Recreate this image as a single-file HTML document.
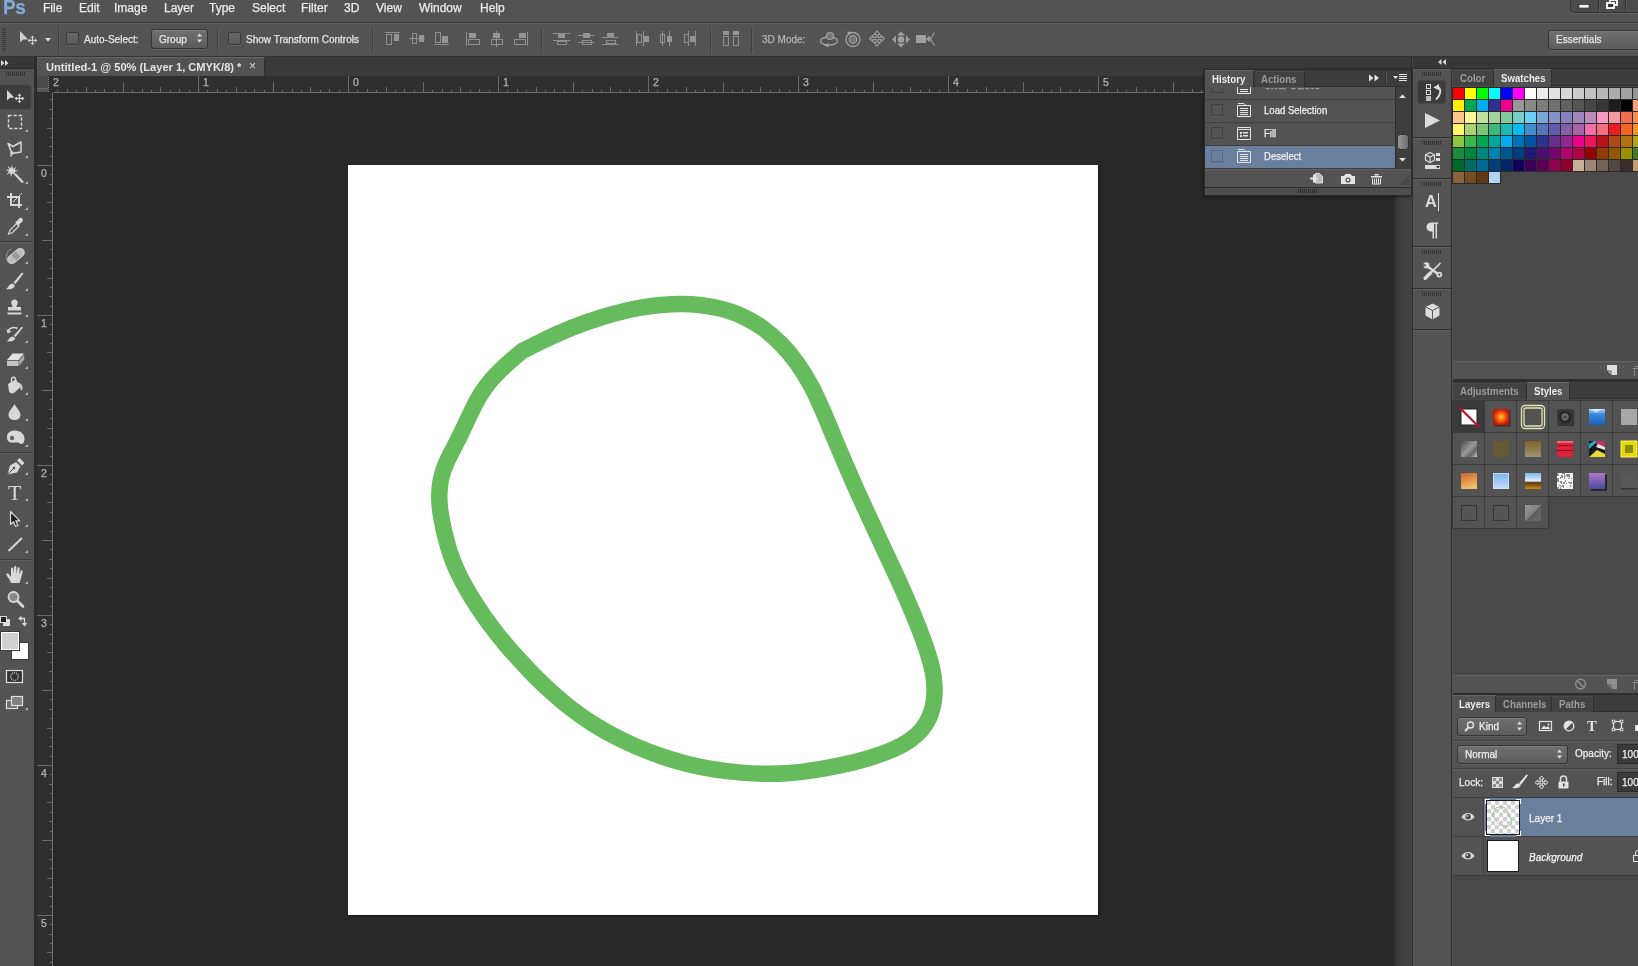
<!DOCTYPE html>
<html lang="en"><head><meta charset="utf-8"><title>Photoshop</title>
<style>
*{box-sizing:border-box;margin:0;padding:0}
html,body{width:1638px;height:966px;overflow:hidden;background:#535353}
body{font-family:"Liberation Sans",sans-serif;font-size:11px;color:#e6e6e6}
#app{position:relative;width:1638px;height:966px;overflow:hidden;background:#535353;will-change:transform}
.abs{position:absolute}
svg{position:absolute;overflow:visible}
.t{position:absolute;white-space:nowrap;line-height:1}
/* menu bar */
#menubar{position:absolute;left:0;top:0;width:1638px;height:23px;background:#535353;border-bottom:1px solid #383838}
#menubar .t{top:2px;font-size:12px;color:#eaeaea}
#optbar{position:absolute;left:0;top:23px;width:1638px;height:34px;background:#535353;border-top:1px solid #616161;border-bottom:1px solid #333}
.sep{position:absolute;top:4px;width:2px;height:25px;border-left:1px solid #3f3f3f;border-right:1px solid #5e5e5e}
.chk{position:absolute;width:13px;height:13px;border:1px solid #3a3a3a;border-radius:2px;background:linear-gradient(#686868,#5a5a5a);box-shadow:0 1px 0 #626262}
.dd{position:absolute;border:1px solid #353535;border-radius:3px;background:linear-gradient(#707070,#5c5c5c);box-shadow:inset 0 1px 0 #7e7e7e,0 1px 0 #606060}
.rl{font-size:10.5px;color:#b4b4b4}
.ui{font-size:10.5px;transform:scaleX(.91);transform-origin:0 0}
.tab{font-size:10.5px;font-weight:bold;color:#9c9c9c;transform:scaleX(.92);transform-origin:0 0}
.tab.on{color:#ececec}
.ui,#menubar .t,.rl{-webkit-text-stroke:.25px currentColor}

</style></head>
<body>
<div id="app">
<div id="menubar">
<span class="t" style="left:3px;top:-3px;font-size:20px;font-weight:bold;color:#82abd8;letter-spacing:-.5px;transform:scaleX(.95);transform-origin:0 0">Ps</span>
<span class="t" style="left:43px">File</span>
<span class="t" style="left:79px">Edit</span>
<span class="t" style="left:114px">Image</span>
<span class="t" style="left:164px">Layer</span>
<span class="t" style="left:209px">Type</span>
<span class="t" style="left:252px">Select</span>
<span class="t" style="left:301px">Filter</span>
<span class="t" style="left:344px">3D</span>
<span class="t" style="left:376px">View</span>
<span class="t" style="left:419px">Window</span>
<span class="t" style="left:480px">Help</span>
</div>
<div id="optbar">
<div class="sep" style="left:58px"></div>
<div class="chk" style="left:66px;top:8px"></div>
<span class="t ui" style="left:84px;top:10px;font-size:11px">Auto-Select:</span>
<div class="dd" style="left:151px;top:5px;width:57px;height:20px"></div>
<span class="t ui" style="left:159px;top:10px;font-size:11px">Group</span>
<div class="sep" style="left:217px"></div>
<div class="chk" style="left:228px;top:8px"></div>
<span class="t ui" style="left:246px;top:10px;font-size:11px">Show Transform Controls</span>
<div class="sep" style="left:372px"></div>
<div class="sep" style="left:541px"></div>
<div class="sep" style="left:710px"></div>
<div class="sep" style="left:751px"></div>
<span class="t ui" style="left:762px;top:10px;color:#b4b4b4;font-size:11px">3D Mode:</span>
<div class="dd" style="left:1548px;top:6px;width:110px;height:20px"></div>
<span class="t ui" style="left:1556px;top:10px;font-size:11px">Essentials</span>
</div>
<svg style="left:0;top:0" width="1638" height="57" shape-rendering="crispEdges"><rect x="2" y="28" width="4" height="1" fill="#3a3a3a"/><rect x="2" y="30" width="4" height="1" fill="#3a3a3a"/><rect x="2" y="32" width="4" height="1" fill="#3a3a3a"/><rect x="2" y="34" width="4" height="1" fill="#3a3a3a"/><rect x="2" y="36" width="4" height="1" fill="#3a3a3a"/><rect x="2" y="38" width="4" height="1" fill="#3a3a3a"/><rect x="2" y="40" width="4" height="1" fill="#3a3a3a"/><rect x="2" y="42" width="4" height="1" fill="#3a3a3a"/><rect x="2" y="44" width="4" height="1" fill="#3a3a3a"/><rect x="2" y="46" width="4" height="1" fill="#3a3a3a"/><rect x="2" y="48" width="4" height="1" fill="#3a3a3a"/><rect x="2" y="50" width="4" height="1" fill="#3a3a3a"/><g shape-rendering="auto"><path d="M20 31v11.500l3.200-3h5z" fill="#cfcfcf"/><path d="M32.500 35.500l-2 2.300h1.400v2h-2v-1.400l-2.300 2 2.300 2v-1.400h2v2h-1.400l2 2.300 2-2.300h-1.400v-2h2v1.400l2.300-2-2.300-2v1.400h-2v-2h1.400z" fill="#cfcfcf"/><path d="M45 38h6l-3 3.500z" fill="#e0e0e0"/></g><g shape-rendering="auto"><path d="M197 36.500l2.500-3 2.500 3zM197 39.500l2.500 3 2.500-3z" fill="#e4e4e4"/></g><rect x="385" y="32" width="15" height="1" fill="#909090"/><rect x="386.5" y="34.5" width="5" height="10" fill="none" stroke="#909090"/><rect x="394" y="34" width="5" height="7" fill="#949494"/><rect x="409" y="38" width="16" height="1" fill="#909090"/><rect x="412.5" y="33.5" width="4" height="10" fill="none" stroke="#909090"/><rect x="419" y="35" width="5" height="7" fill="#949494"/><rect x="434" y="44" width="15" height="1" fill="#909090"/><rect x="435.5" y="32.5" width="5" height="10" fill="none" stroke="#909090"/><rect x="442" y="36" width="6" height="7" fill="#949494"/><rect x="466" y="32" width="1" height="14" fill="#909090"/><rect x="469" y="33" width="7" height="5" fill="#949494"/><rect x="468.5" y="39.5" width="11" height="5" fill="none" stroke="#909090"/><rect x="496" y="31" width="1" height="16" fill="#909090"/><rect x="493" y="33" width="7" height="5" fill="#949494"/><rect x="491.5" y="39.5" width="11" height="5" fill="none" stroke="#909090"/><rect x="527" y="32" width="1" height="14" fill="#909090"/><rect x="519" y="33" width="7" height="5" fill="#949494"/><rect x="514.5" y="39.5" width="11" height="5" fill="none" stroke="#909090"/><rect x="553" y="33" width="17" height="1" fill="#909090"/><rect x="553" y="40" width="17" height="1" fill="#909090"/><rect x="558" y="34" width="7" height="4" fill="#949494"/><rect x="557.5" y="41.5" width="9" height="3" fill="none" stroke="#909090"/><rect x="578" y="35" width="16" height="1" fill="#909090"/><rect x="578" y="42" width="16" height="1" fill="#909090"/><rect x="583" y="33" width="7" height="5" fill="#949494"/><rect x="582.5" y="40.5" width="9" height="4" fill="none" stroke="#909090"/><rect x="602" y="37" width="16" height="1" fill="#909090"/><rect x="602" y="44" width="16" height="1" fill="#909090"/><rect x="607" y="33" width="7" height="4" fill="#949494"/><rect x="606.5" y="40.5" width="9" height="3" fill="none" stroke="#909090"/><rect x="636" y="31" width="1" height="15" fill="#909090"/><rect x="643" y="31" width="1" height="15" fill="#909090"/><rect x="637.5" y="34.5" width="4" height="8" fill="none" stroke="#909090"/><rect x="644" y="36" width="5" height="6" fill="#949494"/><rect x="662" y="31" width="1" height="15" fill="#909090"/><rect x="669" y="31" width="1" height="15" fill="#909090"/><rect x="660.5" y="34.5" width="4" height="8" fill="none" stroke="#909090"/><rect x="667" y="36" width="5" height="6" fill="#949494"/><rect x="688" y="31" width="1" height="15" fill="#909090"/><rect x="695" y="31" width="1" height="15" fill="#909090"/><rect x="684.5" y="34.5" width="4" height="8" fill="none" stroke="#909090"/><rect x="690" y="36" width="5" height="6" fill="#949494"/><rect x="723" y="31" width="6" height="4" fill="#949494"/><rect x="733" y="31" width="6" height="4" fill="#949494"/><rect x="723.5" y="36.5" width="5" height="9" fill="none" stroke="#909090"/><rect x="733.5" y="36.5" width="5" height="9" fill="none" stroke="#909090"/></svg>
<svg style="left:0;top:0" width="1638" height="57"><ellipse cx="829" cy="41" rx="8.500" ry="4" fill="none" stroke="#a0a0a0" stroke-width="1.300"/><circle cx="830" cy="36" r="3.500" fill="#777" stroke="#a0a0a0" stroke-width="1.200"/><path d="M824 45.500l4.500-2.500v4.500z" fill="#a0a0a0"/><circle cx="853" cy="39.500" r="7" fill="none" stroke="#a0a0a0" stroke-width="1.300"/><circle cx="853" cy="39.500" r="3.800" fill="#777" stroke="#a0a0a0" stroke-width="1.200"/><path d="M847 31.500l5 .5-3 3.500z" fill="#a0a0a0"/><path d="M877 31l3 3.500h-2v3h3v-2l3.500 3-3.500 3v-2h-3v3h2l-3 3.500-3-3.500h2v-3h-3v2l-3.500-3 3.500-3v2h3v-3h-2z" fill="none" stroke="#a0a0a0" stroke-width="1.100"/><path d="M901 31.5l4 4h-8zM901 47.5l4-4h-8zM892 39.5l4-4v8zM910 39.5l-4-4v8z" fill="#a0a0a0"/><circle cx="901" cy="39.5" r="3.300" fill="#a0a0a0"/><rect x="916" y="35" width="10" height="8" fill="#a0a0a0"/><path d="M926 39l4-3.500v7z" fill="#a0a0a0"/><path d="M934.500 32.500l-4 6.500 4 6.500" fill="none" stroke="#a0a0a0" stroke-width="1.100"/><path d="M1570.500 -1v10c0 2 1.500 3.500 3.500 3.500h70v-13.500z" fill="#4c4c4c" stroke="#333"/><path d="M1571 13.500h70" stroke="#626262" stroke-width="1"/><rect x="1598" y="0" width="1" height="12" fill="#353535"/><rect x="1599" y="0" width="1" height="12" fill="#5a5a5a"/><rect x="1625" y="0" width="1" height="12" fill="#353535"/><rect x="1626" y="0" width="1" height="12" fill="#5a5a5a"/><rect x="1579" y="4.500" width="10" height="3.500" fill="#f0f0f0" stroke="#2a2a2a" stroke-width=".6"/><rect x="1610" y="0" width="7" height="5" fill="none" stroke="#f0f0f0" stroke-width="2"/><rect x="1607" y="3" width="7" height="5" fill="#333" stroke="#f0f0f0" stroke-width="2"/></svg>
<div class="abs" style="left:0;top:57px;width:1638px;height:13px;background:#3a3a3a"></div>
<div class="abs" style="left:36px;top:57px;width:1376px;height:19px;background:#3a3a3a"></div>
<div class="abs" style="left:37px;top:57px;width:228px;height:19px;background:#535353;border-top:1px solid #676767;border-left:1px solid #5c5c5c;border-right:1px solid #2f2f2f"></div>
<span class="t" id="doctitle" style="left:46px;top:62px;font-size:11px;font-weight:bold;color:#e4e4e4;transform:scaleX(1.01);transform-origin:0 0">Untitled-1 @ 50% (Layer 1, CMYK/8) *</span>
<span class="t" style="left:249px;top:60px;font-size:12px;color:#d8d8d8">×</span>
<div class="abs" style="left:36px;top:76px;width:1360px;height:890px;background:#282828"></div>
<svg style="left:36px;top:76px" width="1360" height="890" shape-rendering="crispEdges"><rect x="1" y="0" width="1359" height="17" fill="#2f2f2f"/><rect x="1" y="17" width="16" height="873" fill="#2f2f2f"/><rect x="21" y="14" width="1" height="3" fill="#6a6a6a"/><rect x="31" y="13" width="1" height="4" fill="#6a6a6a"/><rect x="40" y="14" width="1" height="3" fill="#6a6a6a"/><rect x="50" y="11" width="1" height="6" fill="#6a6a6a"/><rect x="59" y="14" width="1" height="3" fill="#6a6a6a"/><rect x="68" y="13" width="1" height="4" fill="#6a6a6a"/><rect x="78" y="14" width="1" height="3" fill="#6a6a6a"/><rect x="87" y="6" width="1" height="11" fill="#6a6a6a"/><rect x="96" y="14" width="1" height="3" fill="#6a6a6a"/><rect x="106" y="13" width="1" height="4" fill="#6a6a6a"/><rect x="115" y="14" width="1" height="3" fill="#6a6a6a"/><rect x="124" y="11" width="1" height="6" fill="#6a6a6a"/><rect x="134" y="14" width="1" height="3" fill="#6a6a6a"/><rect x="143" y="13" width="1" height="4" fill="#6a6a6a"/><rect x="153" y="14" width="1" height="3" fill="#6a6a6a"/><rect x="162" y="0" width="1" height="17" fill="#6a6a6a"/><rect x="171" y="14" width="1" height="3" fill="#6a6a6a"/><rect x="181" y="13" width="1" height="4" fill="#6a6a6a"/><rect x="190" y="14" width="1" height="3" fill="#6a6a6a"/><rect x="200" y="11" width="1" height="6" fill="#6a6a6a"/><rect x="209" y="14" width="1" height="3" fill="#6a6a6a"/><rect x="218" y="13" width="1" height="4" fill="#6a6a6a"/><rect x="228" y="14" width="1" height="3" fill="#6a6a6a"/><rect x="237" y="6" width="1" height="11" fill="#6a6a6a"/><rect x="246" y="14" width="1" height="3" fill="#6a6a6a"/><rect x="256" y="13" width="1" height="4" fill="#6a6a6a"/><rect x="265" y="14" width="1" height="3" fill="#6a6a6a"/><rect x="274" y="11" width="1" height="6" fill="#6a6a6a"/><rect x="284" y="14" width="1" height="3" fill="#6a6a6a"/><rect x="293" y="13" width="1" height="4" fill="#6a6a6a"/><rect x="303" y="14" width="1" height="3" fill="#6a6a6a"/><rect x="312" y="0" width="1" height="17" fill="#6a6a6a"/><rect x="321" y="14" width="1" height="3" fill="#6a6a6a"/><rect x="331" y="13" width="1" height="4" fill="#6a6a6a"/><rect x="340" y="14" width="1" height="3" fill="#6a6a6a"/><rect x="350" y="11" width="1" height="6" fill="#6a6a6a"/><rect x="359" y="14" width="1" height="3" fill="#6a6a6a"/><rect x="368" y="13" width="1" height="4" fill="#6a6a6a"/><rect x="378" y="14" width="1" height="3" fill="#6a6a6a"/><rect x="387" y="6" width="1" height="11" fill="#6a6a6a"/><rect x="396" y="14" width="1" height="3" fill="#6a6a6a"/><rect x="406" y="13" width="1" height="4" fill="#6a6a6a"/><rect x="415" y="14" width="1" height="3" fill="#6a6a6a"/><rect x="424" y="11" width="1" height="6" fill="#6a6a6a"/><rect x="434" y="14" width="1" height="3" fill="#6a6a6a"/><rect x="443" y="13" width="1" height="4" fill="#6a6a6a"/><rect x="453" y="14" width="1" height="3" fill="#6a6a6a"/><rect x="462" y="0" width="1" height="17" fill="#6a6a6a"/><rect x="471" y="14" width="1" height="3" fill="#6a6a6a"/><rect x="481" y="13" width="1" height="4" fill="#6a6a6a"/><rect x="490" y="14" width="1" height="3" fill="#6a6a6a"/><rect x="500" y="11" width="1" height="6" fill="#6a6a6a"/><rect x="509" y="14" width="1" height="3" fill="#6a6a6a"/><rect x="518" y="13" width="1" height="4" fill="#6a6a6a"/><rect x="528" y="14" width="1" height="3" fill="#6a6a6a"/><rect x="537" y="6" width="1" height="11" fill="#6a6a6a"/><rect x="546" y="14" width="1" height="3" fill="#6a6a6a"/><rect x="556" y="13" width="1" height="4" fill="#6a6a6a"/><rect x="565" y="14" width="1" height="3" fill="#6a6a6a"/><rect x="574" y="11" width="1" height="6" fill="#6a6a6a"/><rect x="584" y="14" width="1" height="3" fill="#6a6a6a"/><rect x="593" y="13" width="1" height="4" fill="#6a6a6a"/><rect x="603" y="14" width="1" height="3" fill="#6a6a6a"/><rect x="612" y="0" width="1" height="17" fill="#6a6a6a"/><rect x="621" y="14" width="1" height="3" fill="#6a6a6a"/><rect x="631" y="13" width="1" height="4" fill="#6a6a6a"/><rect x="640" y="14" width="1" height="3" fill="#6a6a6a"/><rect x="650" y="11" width="1" height="6" fill="#6a6a6a"/><rect x="659" y="14" width="1" height="3" fill="#6a6a6a"/><rect x="668" y="13" width="1" height="4" fill="#6a6a6a"/><rect x="678" y="14" width="1" height="3" fill="#6a6a6a"/><rect x="687" y="6" width="1" height="11" fill="#6a6a6a"/><rect x="696" y="14" width="1" height="3" fill="#6a6a6a"/><rect x="706" y="13" width="1" height="4" fill="#6a6a6a"/><rect x="715" y="14" width="1" height="3" fill="#6a6a6a"/><rect x="724" y="11" width="1" height="6" fill="#6a6a6a"/><rect x="734" y="14" width="1" height="3" fill="#6a6a6a"/><rect x="743" y="13" width="1" height="4" fill="#6a6a6a"/><rect x="753" y="14" width="1" height="3" fill="#6a6a6a"/><rect x="762" y="0" width="1" height="17" fill="#6a6a6a"/><rect x="771" y="14" width="1" height="3" fill="#6a6a6a"/><rect x="781" y="13" width="1" height="4" fill="#6a6a6a"/><rect x="790" y="14" width="1" height="3" fill="#6a6a6a"/><rect x="800" y="11" width="1" height="6" fill="#6a6a6a"/><rect x="809" y="14" width="1" height="3" fill="#6a6a6a"/><rect x="818" y="13" width="1" height="4" fill="#6a6a6a"/><rect x="828" y="14" width="1" height="3" fill="#6a6a6a"/><rect x="837" y="6" width="1" height="11" fill="#6a6a6a"/><rect x="846" y="14" width="1" height="3" fill="#6a6a6a"/><rect x="856" y="13" width="1" height="4" fill="#6a6a6a"/><rect x="865" y="14" width="1" height="3" fill="#6a6a6a"/><rect x="874" y="11" width="1" height="6" fill="#6a6a6a"/><rect x="884" y="14" width="1" height="3" fill="#6a6a6a"/><rect x="893" y="13" width="1" height="4" fill="#6a6a6a"/><rect x="903" y="14" width="1" height="3" fill="#6a6a6a"/><rect x="912" y="0" width="1" height="17" fill="#6a6a6a"/><rect x="921" y="14" width="1" height="3" fill="#6a6a6a"/><rect x="931" y="13" width="1" height="4" fill="#6a6a6a"/><rect x="940" y="14" width="1" height="3" fill="#6a6a6a"/><rect x="950" y="11" width="1" height="6" fill="#6a6a6a"/><rect x="959" y="14" width="1" height="3" fill="#6a6a6a"/><rect x="968" y="13" width="1" height="4" fill="#6a6a6a"/><rect x="978" y="14" width="1" height="3" fill="#6a6a6a"/><rect x="987" y="6" width="1" height="11" fill="#6a6a6a"/><rect x="996" y="14" width="1" height="3" fill="#6a6a6a"/><rect x="1006" y="13" width="1" height="4" fill="#6a6a6a"/><rect x="1015" y="14" width="1" height="3" fill="#6a6a6a"/><rect x="1024" y="11" width="1" height="6" fill="#6a6a6a"/><rect x="1034" y="14" width="1" height="3" fill="#6a6a6a"/><rect x="1043" y="13" width="1" height="4" fill="#6a6a6a"/><rect x="1053" y="14" width="1" height="3" fill="#6a6a6a"/><rect x="1062" y="0" width="1" height="17" fill="#6a6a6a"/><rect x="1071" y="14" width="1" height="3" fill="#6a6a6a"/><rect x="1081" y="13" width="1" height="4" fill="#6a6a6a"/><rect x="1090" y="14" width="1" height="3" fill="#6a6a6a"/><rect x="1100" y="11" width="1" height="6" fill="#6a6a6a"/><rect x="1109" y="14" width="1" height="3" fill="#6a6a6a"/><rect x="1118" y="13" width="1" height="4" fill="#6a6a6a"/><rect x="1128" y="14" width="1" height="3" fill="#6a6a6a"/><rect x="1137" y="6" width="1" height="11" fill="#6a6a6a"/><rect x="1146" y="14" width="1" height="3" fill="#6a6a6a"/><rect x="1156" y="13" width="1" height="4" fill="#6a6a6a"/><rect x="1165" y="14" width="1" height="3" fill="#6a6a6a"/><rect x="1174" y="11" width="1" height="6" fill="#6a6a6a"/><rect x="1184" y="14" width="1" height="3" fill="#6a6a6a"/><rect x="1193" y="13" width="1" height="4" fill="#6a6a6a"/><rect x="1203" y="14" width="1" height="3" fill="#6a6a6a"/><rect x="1212" y="0" width="1" height="17" fill="#6a6a6a"/><rect x="1221" y="14" width="1" height="3" fill="#6a6a6a"/><rect x="1231" y="13" width="1" height="4" fill="#6a6a6a"/><rect x="1240" y="14" width="1" height="3" fill="#6a6a6a"/><rect x="1250" y="11" width="1" height="6" fill="#6a6a6a"/><rect x="1259" y="14" width="1" height="3" fill="#6a6a6a"/><rect x="1268" y="13" width="1" height="4" fill="#6a6a6a"/><rect x="1278" y="14" width="1" height="3" fill="#6a6a6a"/><rect x="1287" y="6" width="1" height="11" fill="#6a6a6a"/><rect x="1296" y="14" width="1" height="3" fill="#6a6a6a"/><rect x="1306" y="13" width="1" height="4" fill="#6a6a6a"/><rect x="1315" y="14" width="1" height="3" fill="#6a6a6a"/><rect x="1324" y="11" width="1" height="6" fill="#6a6a6a"/><rect x="1334" y="14" width="1" height="3" fill="#6a6a6a"/><rect x="1343" y="13" width="1" height="4" fill="#6a6a6a"/><rect x="1353" y="14" width="1" height="3" fill="#6a6a6a"/><rect x="14" y="23" width="3" height="1" fill="#6a6a6a"/><rect x="13" y="33" width="4" height="1" fill="#6a6a6a"/><rect x="14" y="42" width="3" height="1" fill="#6a6a6a"/><rect x="11" y="52" width="6" height="1" fill="#6a6a6a"/><rect x="14" y="61" width="3" height="1" fill="#6a6a6a"/><rect x="13" y="70" width="4" height="1" fill="#6a6a6a"/><rect x="14" y="80" width="3" height="1" fill="#6a6a6a"/><rect x="0" y="89" width="17" height="1" fill="#6a6a6a"/><rect x="14" y="98" width="3" height="1" fill="#6a6a6a"/><rect x="13" y="108" width="4" height="1" fill="#6a6a6a"/><rect x="14" y="117" width="3" height="1" fill="#6a6a6a"/><rect x="11" y="126" width="6" height="1" fill="#6a6a6a"/><rect x="14" y="136" width="3" height="1" fill="#6a6a6a"/><rect x="13" y="145" width="4" height="1" fill="#6a6a6a"/><rect x="14" y="155" width="3" height="1" fill="#6a6a6a"/><rect x="6" y="164" width="11" height="1" fill="#6a6a6a"/><rect x="14" y="173" width="3" height="1" fill="#6a6a6a"/><rect x="13" y="183" width="4" height="1" fill="#6a6a6a"/><rect x="14" y="192" width="3" height="1" fill="#6a6a6a"/><rect x="11" y="202" width="6" height="1" fill="#6a6a6a"/><rect x="14" y="211" width="3" height="1" fill="#6a6a6a"/><rect x="13" y="220" width="4" height="1" fill="#6a6a6a"/><rect x="14" y="230" width="3" height="1" fill="#6a6a6a"/><rect x="0" y="239" width="17" height="1" fill="#6a6a6a"/><rect x="14" y="248" width="3" height="1" fill="#6a6a6a"/><rect x="13" y="258" width="4" height="1" fill="#6a6a6a"/><rect x="14" y="267" width="3" height="1" fill="#6a6a6a"/><rect x="11" y="276" width="6" height="1" fill="#6a6a6a"/><rect x="14" y="286" width="3" height="1" fill="#6a6a6a"/><rect x="13" y="295" width="4" height="1" fill="#6a6a6a"/><rect x="14" y="305" width="3" height="1" fill="#6a6a6a"/><rect x="6" y="314" width="11" height="1" fill="#6a6a6a"/><rect x="14" y="323" width="3" height="1" fill="#6a6a6a"/><rect x="13" y="333" width="4" height="1" fill="#6a6a6a"/><rect x="14" y="342" width="3" height="1" fill="#6a6a6a"/><rect x="11" y="352" width="6" height="1" fill="#6a6a6a"/><rect x="14" y="361" width="3" height="1" fill="#6a6a6a"/><rect x="13" y="370" width="4" height="1" fill="#6a6a6a"/><rect x="14" y="380" width="3" height="1" fill="#6a6a6a"/><rect x="0" y="389" width="17" height="1" fill="#6a6a6a"/><rect x="14" y="398" width="3" height="1" fill="#6a6a6a"/><rect x="13" y="408" width="4" height="1" fill="#6a6a6a"/><rect x="14" y="417" width="3" height="1" fill="#6a6a6a"/><rect x="11" y="426" width="6" height="1" fill="#6a6a6a"/><rect x="14" y="436" width="3" height="1" fill="#6a6a6a"/><rect x="13" y="445" width="4" height="1" fill="#6a6a6a"/><rect x="14" y="455" width="3" height="1" fill="#6a6a6a"/><rect x="6" y="464" width="11" height="1" fill="#6a6a6a"/><rect x="14" y="473" width="3" height="1" fill="#6a6a6a"/><rect x="13" y="483" width="4" height="1" fill="#6a6a6a"/><rect x="14" y="492" width="3" height="1" fill="#6a6a6a"/><rect x="11" y="502" width="6" height="1" fill="#6a6a6a"/><rect x="14" y="511" width="3" height="1" fill="#6a6a6a"/><rect x="13" y="520" width="4" height="1" fill="#6a6a6a"/><rect x="14" y="530" width="3" height="1" fill="#6a6a6a"/><rect x="0" y="539" width="17" height="1" fill="#6a6a6a"/><rect x="14" y="548" width="3" height="1" fill="#6a6a6a"/><rect x="13" y="558" width="4" height="1" fill="#6a6a6a"/><rect x="14" y="567" width="3" height="1" fill="#6a6a6a"/><rect x="11" y="576" width="6" height="1" fill="#6a6a6a"/><rect x="14" y="586" width="3" height="1" fill="#6a6a6a"/><rect x="13" y="595" width="4" height="1" fill="#6a6a6a"/><rect x="14" y="605" width="3" height="1" fill="#6a6a6a"/><rect x="6" y="614" width="11" height="1" fill="#6a6a6a"/><rect x="14" y="623" width="3" height="1" fill="#6a6a6a"/><rect x="13" y="633" width="4" height="1" fill="#6a6a6a"/><rect x="14" y="642" width="3" height="1" fill="#6a6a6a"/><rect x="11" y="652" width="6" height="1" fill="#6a6a6a"/><rect x="14" y="661" width="3" height="1" fill="#6a6a6a"/><rect x="13" y="670" width="4" height="1" fill="#6a6a6a"/><rect x="14" y="680" width="3" height="1" fill="#6a6a6a"/><rect x="0" y="689" width="17" height="1" fill="#6a6a6a"/><rect x="14" y="698" width="3" height="1" fill="#6a6a6a"/><rect x="13" y="708" width="4" height="1" fill="#6a6a6a"/><rect x="14" y="717" width="3" height="1" fill="#6a6a6a"/><rect x="11" y="726" width="6" height="1" fill="#6a6a6a"/><rect x="14" y="736" width="3" height="1" fill="#6a6a6a"/><rect x="13" y="745" width="4" height="1" fill="#6a6a6a"/><rect x="14" y="755" width="3" height="1" fill="#6a6a6a"/><rect x="6" y="764" width="11" height="1" fill="#6a6a6a"/><rect x="14" y="773" width="3" height="1" fill="#6a6a6a"/><rect x="13" y="783" width="4" height="1" fill="#6a6a6a"/><rect x="14" y="792" width="3" height="1" fill="#6a6a6a"/><rect x="11" y="802" width="6" height="1" fill="#6a6a6a"/><rect x="14" y="811" width="3" height="1" fill="#6a6a6a"/><rect x="13" y="820" width="4" height="1" fill="#6a6a6a"/><rect x="14" y="830" width="3" height="1" fill="#6a6a6a"/><rect x="0" y="839" width="17" height="1" fill="#6a6a6a"/><rect x="14" y="848" width="3" height="1" fill="#6a6a6a"/><rect x="13" y="858" width="4" height="1" fill="#6a6a6a"/><rect x="14" y="867" width="3" height="1" fill="#6a6a6a"/><rect x="11" y="876" width="6" height="1" fill="#6a6a6a"/><rect x="14" y="886" width="3" height="1" fill="#6a6a6a"/><rect x="17" y="16" width="1343" height="1" fill="#707070"/><rect x="16" y="17" width="1" height="873" fill="#707070"/><rect x="1" y="0" width="16" height="17" fill="#2f2f2f"/><rect x="1" y="0" width="11" height="16" fill="#4a4a4a"/><rect x="1" y="12" width="11" height="4" fill="#565656"/><rect x="12" y="1" width="1" height="1" fill="#8a8a8a"/><rect x="12" y="3" width="1" height="1" fill="#8a8a8a"/><rect x="12" y="5" width="1" height="1" fill="#8a8a8a"/><rect x="12" y="7" width="1" height="1" fill="#8a8a8a"/><rect x="12" y="9" width="1" height="1" fill="#8a8a8a"/><rect x="12" y="11" width="1" height="1" fill="#8a8a8a"/><rect x="12" y="13" width="1" height="1" fill="#8a8a8a"/><rect x="12" y="15" width="1" height="1" fill="#8a8a8a"/><rect x="1" y="12" width="1" height="1" fill="#777"/><rect x="3" y="12" width="1" height="1" fill="#777"/><rect x="5" y="12" width="1" height="1" fill="#777"/><rect x="7" y="12" width="1" height="1" fill="#777"/><rect x="9" y="12" width="1" height="1" fill="#777"/><rect x="11" y="12" width="1" height="1" fill="#777"/></svg>
<span class="t rl" style="left:53px;top:77px">2</span>
<span class="t rl" style="left:203px;top:77px">1</span>
<span class="t rl" style="left:353px;top:77px">0</span>
<span class="t rl" style="left:503px;top:77px">1</span>
<span class="t rl" style="left:653px;top:77px">2</span>
<span class="t rl" style="left:803px;top:77px">3</span>
<span class="t rl" style="left:953px;top:77px">4</span>
<span class="t rl" style="left:1103px;top:77px">5</span>
<span class="t rl" style="left:41px;top:168px">0</span>
<span class="t rl" style="left:41px;top:318px">1</span>
<span class="t rl" style="left:41px;top:468px">2</span>
<span class="t rl" style="left:41px;top:618px">3</span>
<span class="t rl" style="left:41px;top:768px">4</span>
<span class="t rl" style="left:41px;top:918px">5</span>
<div class="abs" style="left:348px;top:165px;width:750px;height:750px;background:#fff;box-shadow:1px 1px 2px rgba(0,0,0,.55)"></div>
<svg style="left:0;top:0" width="1638" height="966"><path d="M522.5 350.8C525.6 349.3 534.8 344.6 541.1 341.6C547.4 338.6 553.9 335.5 560.4 332.7C566.9 329.9 573.7 327.1 580.4 324.6C587.1 322.1 593.9 319.7 600.6 317.6C607.3 315.5 614.1 313.5 620.8 311.9C627.5 310.2 634.3 308.8 641.0 307.7C647.7 306.6 654.5 305.6 661.2 305.0C667.9 304.4 674.6 304.1 681.3 304.1C688.0 304.1 694.8 304.4 701.5 305.2C708.2 306.0 714.9 307.1 721.6 308.9C728.3 310.7 735.0 312.8 741.7 315.9C748.4 319.0 755.2 322.7 761.8 327.4C768.3 332.1 775.0 337.8 781.0 343.9C787.0 350.0 792.6 356.9 797.6 363.8C802.6 370.8 806.9 378.0 811.0 385.6C815.1 393.2 818.6 401.2 822.4 409.6C826.1 418.0 829.7 427.1 833.5 436.1C837.3 445.1 841.2 454.5 845.2 463.8C849.2 473.1 853.3 482.5 857.5 491.8C861.7 501.1 866.0 510.4 870.3 519.7C874.6 529.0 879.0 538.4 883.3 547.7C887.6 557.0 892.1 566.3 896.3 575.6C900.5 584.9 904.8 594.3 908.6 603.3C912.5 612.3 916.2 621.4 919.4 629.5C922.5 637.6 925.3 645.3 927.5 652.1C929.7 658.9 931.3 664.8 932.5 670.5C933.7 676.2 934.3 681.4 934.5 686.6C934.7 691.9 934.5 697.0 933.7 702.0C932.9 707.0 931.6 712.0 929.6 716.6C927.6 721.2 925.1 725.6 921.8 729.5C918.5 733.4 914.7 736.9 909.9 740.2C905.1 743.5 899.6 746.6 892.9 749.5C886.2 752.4 878.2 755.2 869.8 757.8C861.3 760.4 851.4 762.9 842.2 764.9C833.0 766.9 823.4 768.7 814.7 770.0C806.0 771.3 798.1 772.3 790.0 772.9C781.9 773.5 774.3 773.8 766.1 773.7C757.9 773.7 749.5 773.3 740.9 772.6C732.3 771.9 723.2 770.9 714.3 769.4C705.4 767.9 696.4 766.1 687.5 763.9C678.6 761.7 669.5 759.0 661.0 756.1C652.5 753.2 644.1 749.9 636.2 746.5C628.3 743.1 620.9 739.6 613.7 735.8C606.5 732.0 599.7 728.1 592.8 723.7C585.9 719.3 578.9 714.4 572.1 709.2C565.3 704.0 558.3 698.0 551.9 692.3C545.5 686.6 539.1 680.4 533.5 674.8C527.9 669.2 522.9 663.7 518.2 658.6C513.6 653.5 509.5 648.9 505.6 644.3C501.7 639.6 498.1 635.2 494.6 630.7C491.1 626.2 487.8 621.8 484.6 617.3C481.4 612.8 478.5 608.3 475.6 603.8C472.7 599.3 470.0 594.9 467.4 590.4C464.8 585.9 462.4 581.4 460.1 576.9C457.8 572.4 455.7 567.9 453.8 563.1C451.9 558.3 450.2 553.2 448.6 548.2C447.1 543.2 445.7 537.9 444.5 533.0C443.3 528.1 442.4 523.5 441.6 519.1C440.8 514.7 440.2 510.8 439.8 506.7C439.4 502.6 439.2 498.8 439.3 494.8C439.4 490.8 439.7 486.9 440.3 482.9C440.9 478.9 441.9 475.0 443.2 471.0C444.5 467.0 446.3 463.0 448.1 459.0C449.9 455.0 452.2 451.1 454.2 447.1C456.2 443.1 458.2 439.2 460.2 435.2C462.1 431.2 464.0 427.3 465.9 423.3C467.8 419.3 469.6 415.4 471.5 411.4C473.4 407.4 475.3 403.5 477.6 399.5C479.9 395.5 482.3 391.6 485.2 387.6C488.1 383.6 491.3 379.6 495.1 375.6C498.9 371.6 503.2 367.5 507.8 363.4C512.4 359.3 520.0 352.9 522.5 350.8" fill="none" stroke="#66bb5c" stroke-width="16.5" stroke-linejoin="round" stroke-linecap="round"/></svg>
<div class="abs" style="left:1393px;top:76px;width:19px;height:890px;background:linear-gradient(90deg,#292929,#3d3d3d 28%,#424242 60%,#414141)"></div>
<div class="abs" style="left:0;top:57px;width:37px;height:909px;background:#535353;border-right:3px solid #2b2b2b"></div>
<div class="abs" style="left:0;top:57px;width:34px;height:12px;background:#383838;border-bottom:1px solid #2c2c2c"></div>
<svg style="left:0;top:0" width="36" height="966"><path d="M1 60l3.5 3-3.5 3zM5 60l3.5 3-3.5 3z" fill="#d8d8d8"/><rect x="6" y="72" width="1" height="4" fill="#333"/><rect x="8" y="72" width="1" height="4" fill="#333"/><rect x="10" y="72" width="1" height="4" fill="#333"/><rect x="12" y="72" width="1" height="4" fill="#333"/><rect x="14" y="72" width="1" height="4" fill="#333"/><rect x="16" y="72" width="1" height="4" fill="#333"/><rect x="18" y="72" width="1" height="4" fill="#333"/><rect x="20" y="72" width="1" height="4" fill="#333"/><rect x="22" y="72" width="1" height="4" fill="#333"/><rect x="24" y="72" width="1" height="4" fill="#333"/><rect x="-2" y="85" width="33" height="24" rx="2" fill="#3d3d3d" stroke="#474747"/><path d="M7 90v10.5l3-2.8h4.5z" fill="#d8d8d8"/><path d="M19.5 93.5l-2 2.3h1.4v2h-2v-1.4l-2.3 2 2.3 2v-1.4h2v2h-1.4l2 2.3 2-2.3h-1.4v-2h2v1.4l2.3-2-2.3-2v1.4h-2v-2h1.4z" fill="#d8d8d8"/><rect x="8.5" y="115.5" width="13" height="13" fill="none" stroke="#d8d8d8" stroke-width="1.4" stroke-dasharray="3.2 1.8"/><path d="M28 129v3h-3z" fill="#b8b8b8"/><path d="M8 143.5l5 3 3.5-2 4.5-2.5v10l-9 1.5zM12 153.5l-1.5 3" fill="none" stroke="#d8d8d8" stroke-width="1.5" stroke-linejoin="round"/><circle cx="12" cy="153" r="1.3" fill="none" stroke="#d8d8d8"/><path d="M28 155v3h-3z" fill="#b8b8b8"/><path d="M12 165l1 4 3.5-2.5-2 3.5 4 .8-4 1.2 1.5 3.5-3.5-2.3-1.5 3.8-.8-4-4 1.8 2.8-3.2-3.5-1.8 4-.3-2-3.8 3.3 2.5z" fill="#d8d8d8"/><path d="M15 174l8 8.5" stroke="#d8d8d8" stroke-width="2.2"/><path d="M28 181v3h-3z" fill="#b8b8b8"/><path d="M11 193v12h11M7 197h12v11" fill="none" stroke="#d8d8d8" stroke-width="2"/><path d="M22 193l-9 9" stroke="#d8d8d8" stroke-width="1"/><path d="M28 207v3h-3z" fill="#b8b8b8"/><path d="M8.5 234l1.5-4 6.5-6.5 2.5 2.5-6.5 6.5z" fill="none" stroke="#d8d8d8" stroke-width="1.2"/><path d="M15 222l2-1 2-2.5c1-1 2.5-1 3.3 0s.8 2.2 0 3.2l-2.5 2 -1 2z" fill="#d8d8d8"/><path d="M28 233v3h-3z" fill="#b8b8b8"/><rect x="0" y="241" width="32" height="1" fill="#3c3c3c"/><rect x="0" y="242" width="32" height="1" fill="#5e5e5e"/><g transform="rotate(-40 16 256)"><rect x="6.5" y="252" width="19" height="8" rx="4" fill="#bdbdbd" stroke="#d8d8d8" stroke-width="1"/><rect x="13" y="252.5" width="6" height="7" fill="#9a9a9a"/></g><path d="M8 262c-3-5-1.5-12 4-13" fill="none" stroke="#d8d8d8" stroke-dasharray="1 1.2"/><path d="M28 261v3h-3z" fill="#b8b8b8"/><path d="M23.5 273.500l-8 10.500 -2-1.500 8.500-10z" fill="#d8d8d8"/><path d="M12.500 283.500l2.500 2c-1 3-4 4.500-9 3.500 2.500-1 2.500-5 6.500-5.500z" fill="#d8d8d8"/><path d="M28 288v3h-3z" fill="#b8b8b8"/><path d="M14.500 299.500c2.200 0 3.300 1.500 3.300 3 0 1.800-1.300 2.500-1.300 4.500h4.500v3.500h-13v-3.500h4.500c0-2-1.300-2.700-1.300-4.500 0-1.500 1.100-3 3.300-3zM7.500 312.500h14v2h-14z" fill="#d8d8d8"/><path d="M28 314v3h-3z" fill="#b8b8b8"/><path d="M23 327.500l-7.500 9.500 -1.800-1.300 8-9z" fill="#d8d8d8"/><path d="M13 336.500l2.300 1.800c-1 2.500-4 4-8.800 3 2.500-.8 2.500-4.300 6.500-4.800z" fill="#d8d8d8"/><path d="M8 331c2-3.500 6-4.500 9.500-2.500" fill="none" stroke="#d8d8d8" stroke-width="1.600"/><path d="M6.500 329l1 4.500 4-1.800z" fill="#d8d8d8"/><path d="M28 340v3h-3z" fill="#b8b8b8"/><path d="M12.500 353.500h11.500l-5.500 6.500h-11.500z" fill="#e4e4e4"/><path d="M7 360.800h11.500v5.200h-11.500z" fill="#c4c4c4"/><path d="M19.200 360.500l5-6v5l-5 6.300z" fill="#a8a8a8"/><path d="M28 366v3h-3z" fill="#b8b8b8"/><path d="M8 384l8-4.500 4.500 7.500-6.500 6c-2 1-4 .5-5-1.500z" fill="#d8d8d8"/><path d="M11.500 383v-3.500c0-3 4-3 4 0v5" fill="none" stroke="#d8d8d8" stroke-width="1.400"/><path d="M18 382.500c3 .5 4.500 2.500 4.500 6.500 0 1.500-2 1.500-2 0 0-2.500-.8-4-2.500-5z" fill="#d8d8d8"/><path d="M28 392v3h-3z" fill="#b8b8b8"/><path d="M14.500 404c1.500 3.500 6 7 6 11 0 3-2.500 5-6 5s-6-2-6-5c0-4 4.500-7.500 6-11z" fill="#d8d8d8"/><path d="M28 418v3h-3z" fill="#b8b8b8"/><path d="M7 437c0-4 3-6.500 8-6.500 5.500 0 9.500 3.500 9.500 8.500 0 3-1.500 5-3 5-2 0-2-1.500-4-1.500h-6c-3 0-4.500-2.500-4.500-5.500z" fill="#d8d8d8"/><circle cx="12" cy="438" r="2.200" fill="#666"/><path d="M28 444v3h-3z" fill="#b8b8b8"/><rect x="0" y="452" width="32" height="1" fill="#3c3c3c"/><rect x="0" y="453" width="32" height="1" fill="#5e5e5e"/><path d="M7.500 474.500l2.500-9 6-3.500 4.500 4.500-3.500 6z" fill="#d8d8d8"/><path d="M8 474l6-6" stroke="#444" stroke-width="1"/><circle cx="14" cy="468" r="1.200" fill="#444"/><path d="M17 460.500l2.500-2.500 5 5-2.500 2.500z" fill="#d8d8d8"/><path d="M28 472v3h-3z" fill="#b8b8b8"/><path d="M28 498v3h-3z" fill="#b8b8b8"/><path d="M10.500 511.500v13l3-2.800 2 4.800 2.300-1-2-4.700h4z" fill="#1e1e1e" stroke="#d8d8d8" stroke-width="1.200" stroke-linejoin="round"/><path d="M28 524v3h-3z" fill="#b8b8b8"/><path d="M8.500 551l13.500-13" stroke="#d8d8d8" stroke-width="1.800"/><path d="M28 550v3h-3z" fill="#b8b8b8"/><rect x="0" y="559" width="32" height="1" fill="#3c3c3c"/><rect x="0" y="560" width="32" height="1" fill="#5e5e5e"/><path d="M11 583c-1-3-3-5.500-4.500-8-.8-1.500 1-2.500 2-1.300l2.500 3v-8c0-1.500 2-1.500 2.200 0l.5 5 .3-6.500c0-1.500 2.200-1.500 2.300 0l.2 6.500 1-5.500c.3-1.500 2.300-1.200 2.200.3l-.5 6 1.500-3.500c.6-1.300 2.300-.6 2 .8-.8 3.500-1.700 7-3.200 11.200z" fill="#d8d8d8"/><path d="M28 581v3h-3z" fill="#b8b8b8"/><circle cx="13.500" cy="597" r="5" fill="#888" stroke="#d8d8d8" stroke-width="1.800"/><path d="M17.500 601l5.500 5.500" stroke="#d8d8d8" stroke-width="2.600" stroke-linecap="round"/><rect x="3.500" y="619.500" width="6" height="6" fill="#ddd" stroke="#ddd"/><rect x="0.500" y="616.500" width="6" height="6" fill="#222" stroke="#ddd"/><path d="M21 618.500h3.500v5" fill="none" stroke="#d8d8d8" stroke-width="1.300"/><path d="M18 618.500l3.500-2.800v5.600zM24.500 626.500l-2.800-3.500h5.600z" fill="#d8d8d8"/><rect x="11.500" y="642.500" width="17" height="17" fill="#ffffff" stroke="#3a3a3a"/><rect x="1.500" y="632.500" width="17" height="17" fill="#d0d0d0" stroke="#ffffff" stroke-width="1"/><rect x="0.500" y="631.500" width="19" height="19" fill="none" stroke="#3a3a3a"/><rect x="6.500" y="670.500" width="16" height="12" fill="#333" stroke="#e0e0e0" stroke-width="1.200"/><circle cx="14.500" cy="676.500" r="3.800" fill="none" stroke="#e0e0e0" stroke-width="1.200" stroke-dasharray="1 1.100"/><rect x="6.500" y="700.500" width="11" height="8" fill="#6a6a6a" stroke="#e0e0e0" stroke-width="1.200"/><rect x="11.500" y="696.500" width="11" height="9" fill="#808080" stroke="#e0e0e0" stroke-width="1.200"/><path d="M28 707v3h-3z" fill="#b8b8b8"/></svg>
<span class="t" style="left:8px;top:482px;font-family:'Liberation Serif',serif;font-size:22px;color:#d8d8d8">T</span>
<div class="abs" style="left:1204px;top:69px;width:208px;height:127px;background:#535353;border:1px solid #2a2a2a;box-shadow:0 1px 3px rgba(0,0,0,.5)"></div>
<div class="abs" style="left:1205px;top:70px;width:206px;height:17px;background:#3c3c3c;border-bottom:1px solid #2e2e2e"></div>
<div class="abs" style="left:1205px;top:70px;width:49px;height:17px;background:#535353;border-top:1px solid #666;border-right:1px solid #2e2e2e"></div>
<div class="abs" style="left:1255px;top:71px;width:50px;height:16px;background:#424242;border-right:1px solid #2e2e2e;border-top:1px solid #4c4c4c"></div>
<span class="t tab on" style="left:1212px;top:74px">History</span>
<span class="t tab" style="left:1261px;top:74px">Actions</span>
<div class="abs" style="left:1205px;top:87px;width:190px;height:13px;background:#535353;border-bottom:1px solid #3e3e3e;overflow:hidden"></div>
<div class="abs" style="left:1205px;top:100px;width:190px;height:23px;background:#535353;border-bottom:1px solid #3e3e3e;overflow:hidden"></div>
<span class="t ui" style="left:1264px;top:105px;color:#f0f0f0">Load Selection</span>
<div class="abs" style="left:1205px;top:123px;width:190px;height:23px;background:#535353;border-bottom:1px solid #3e3e3e;overflow:hidden"></div>
<span class="t ui" style="left:1264px;top:128px;color:#f0f0f0">Fill</span>
<div class="abs" style="left:1205px;top:146px;width:190px;height:23px;background:#6a7f9c;border-bottom:1px solid #3e3e3e;overflow:hidden"></div>
<span class="t ui" style="left:1264px;top:151px;color:#f0f0f0">Deselect</span>
<span class="t ui" style="left:1264px;top:80px;color:#f0f0f0;clip-path:inset(8.5px 0 0 0)">Clear Guides</span>
<svg style="left:0;top:0" width="1638" height="200"><rect x="1211.5" y="104.5" width="11" height="11" fill="none" stroke="#3f3f3f"/><path d="M1211.5 116.5h12" stroke="#666" stroke-opacity=".5"/><rect x="1211.5" y="127.5" width="11" height="11" fill="none" stroke="#3f3f3f"/><path d="M1211.5 139.5h12" stroke="#666" stroke-opacity=".5"/><rect x="1211.5" y="150.5" width="11" height="11" fill="none" stroke="#55688a"/><path d="M1211.5 162.5h12" stroke="#666" stroke-opacity=".5"/><rect x="1211.500" y="81.500" width="11" height="11" fill="none" stroke="#3f3f3f" clip-path="inset(7 0 0 0)"/><path d="M1237.500 105.5h13v11h-13z" fill="none" stroke="#e4e4e4"/><path d="M1238 103.5h6l2 2" fill="none" stroke="#e4e4e4"/><rect x="1240" y="108" width="8" height="1" fill="#e4e4e4"/><rect x="1240" y="110" width="8" height="1" fill="#e4e4e4"/><rect x="1240" y="112" width="8" height="1" fill="#e4e4e4"/><rect x="1240" y="114" width="8" height="1" fill="#e4e4e4"/><path d="M1237.500 127.5h13v12h-13z" fill="none" stroke="#e4e4e4"/><rect x="1238" y="129" width="12" height="1" fill="#e4e4e4"/><rect x="1240" y="132" width="2" height="2" fill="#e4e4e4"/><rect x="1243" y="132" width="5" height="1.5" fill="#e4e4e4"/><rect x="1240" y="135" width="2" height="2" fill="#e4e4e4"/><rect x="1243" y="135" width="5" height="1.5" fill="#e4e4e4"/><path d="M1237.500 151.5h13v11h-13z" fill="none" stroke="#e4e4e4"/><path d="M1238 149.5h6l2 2" fill="none" stroke="#e4e4e4"/><rect x="1240" y="154" width="8" height="1" fill="#e4e4e4"/><rect x="1240" y="156" width="8" height="1" fill="#e4e4e4"/><rect x="1240" y="158" width="8" height="1" fill="#e4e4e4"/><rect x="1240" y="160" width="8" height="1" fill="#e4e4e4"/><path d="M1237.500 87v6.500h13v-6.500" fill="none" stroke="#e4e4e4"/><rect x="1240" y="89" width="8" height="1" fill="#e4e4e4"/><rect x="1240" y="91" width="8" height="1" fill="#e4e4e4"/><rect x="1395" y="87" width="16" height="82" fill="#3e3e3e"/><rect x="1395" y="87" width="1" height="82" fill="#2e2e2e"/><path d="M1399 98l3.500-3.500 3.500 3.500z" fill="#e0e0e0"/><path d="M1399 158l3.500 3.500 3.500-3.500z" fill="#e0e0e0"/><defs><linearGradient id="thg" x1="0" x2="1"><stop offset="0" stop-color="#9a9a9a"/><stop offset="1" stop-color="#6c6c6c"/></linearGradient></defs><rect x="1397.500" y="134.500" width="11" height="15" rx="3" fill="url(#thg)" stroke="#2f2f2f"/><path d="M1369 74.500l4.500 3.500-4.500 3.500zM1374.500 74.500l4.500 3.500-4.500 3.500z" fill="#e4e4e4"/><rect x="1385" y="73" width="1" height="11" fill="#2e2e2e"/><rect x="1386" y="73" width="1" height="11" fill="#5a5a5a"/><path d="M1393 76h5l-2.500 3z" fill="#e4e4e4"/><rect x="1399" y="74" width="8" height="1" fill="#e4e4e4"/><rect x="1399" y="76" width="8" height="1" fill="#e4e4e4"/><rect x="1399" y="78" width="8" height="1" fill="#e4e4e4"/><rect x="1399" y="80" width="8" height="1" fill="#e4e4e4"/><rect x="1205" y="169" width="206" height="18" fill="#535353"/><rect x="1205" y="169" width="206" height="1" fill="#5e5e5e"/><path d="M1315.500 173.500h4l3 3v6.500h-7z" fill="#bbb" stroke="#e4e4e4"/><path d="M1310 178.500h8M1314 174.500v8" stroke="#e4e4e4" stroke-width="2"/><path d="M1341 176h3l1.500-2h5l1.500 2h3v8h-14z" fill="#e4e4e4"/><circle cx="1348" cy="180" r="2.600" fill="#535353"/><circle cx="1348" cy="180" r="1.300" fill="#e4e4e4"/><path d="M1371 176h11v1.500h-11zM1374.500 174h4v1.500h-4z" fill="#e4e4e4"/><path d="M1372.500 178.500v5.500h8v-5.500" fill="none" stroke="#e4e4e4"/><path d="M1374.500 178.500v5M1376.500 178.500v5M1378.500 178.500v5" stroke="#e4e4e4"/><rect x="1400.0" y="183.5" width="1.200" height="1.200" fill="#2e2e2e"/><rect x="1402.5" y="181.0" width="1.200" height="1.200" fill="#2e2e2e"/><rect x="1402.5" y="183.5" width="1.200" height="1.200" fill="#2e2e2e"/><rect x="1405.0" y="178.5" width="1.200" height="1.200" fill="#2e2e2e"/><rect x="1405.0" y="181.0" width="1.200" height="1.200" fill="#2e2e2e"/><rect x="1405.0" y="183.5" width="1.200" height="1.200" fill="#2e2e2e"/><rect x="1407.5" y="176.0" width="1.200" height="1.200" fill="#2e2e2e"/><rect x="1407.5" y="178.5" width="1.200" height="1.200" fill="#2e2e2e"/><rect x="1407.5" y="181.0" width="1.200" height="1.200" fill="#2e2e2e"/><rect x="1407.5" y="183.5" width="1.200" height="1.200" fill="#2e2e2e"/><rect x="1205" y="187" width="206" height="1" fill="#2e2e2e"/><rect x="1205" y="188" width="206" height="7" fill="#4d4d4d"/><rect x="1298" y="189" width="1" height="4" fill="#2e2e2e"/><rect x="1300" y="189" width="1" height="4" fill="#2e2e2e"/><rect x="1302" y="189" width="1" height="4" fill="#2e2e2e"/><rect x="1304" y="189" width="1" height="4" fill="#2e2e2e"/><rect x="1306" y="189" width="1" height="4" fill="#2e2e2e"/><rect x="1308" y="189" width="1" height="4" fill="#2e2e2e"/><rect x="1310" y="189" width="1" height="4" fill="#2e2e2e"/><rect x="1312" y="189" width="1" height="4" fill="#2e2e2e"/><rect x="1314" y="189" width="1" height="4" fill="#2e2e2e"/><rect x="1316" y="189" width="1" height="4" fill="#2e2e2e"/></svg>
<div class="abs" style="left:1412px;top:57px;width:226px;height:12px;background:#383838;border-bottom:1px solid #2c2c2c"></div>
<div class="abs" style="left:1412px;top:69px;width:40px;height:897px;background:#535353;border-left:1px solid #2e2e2e;border-right:1px solid #2e2e2e"></div>
<svg style="left:0;top:0" width="1638" height="400"><path d="M1441.500 59v6l-3.500-3zM1446 59v6l-3.500-3z" fill="#dcdcdc"/><rect x="1413" y="69" width="38" height="1" fill="#5f5f5f"/><rect x="1411" y="57" width="1" height="12" fill="#2a2a2a"/><rect x="1412" y="57" width="1" height="12" fill="#484848"/><rect x="1422" y="72" width="1" height="4" fill="#333"/><rect x="1424" y="72" width="1" height="4" fill="#333"/><rect x="1426" y="72" width="1" height="4" fill="#333"/><rect x="1428" y="72" width="1" height="4" fill="#333"/><rect x="1430" y="72" width="1" height="4" fill="#333"/><rect x="1432" y="72" width="1" height="4" fill="#333"/><rect x="1434" y="72" width="1" height="4" fill="#333"/><rect x="1436" y="72" width="1" height="4" fill="#333"/><rect x="1438" y="72" width="1" height="4" fill="#333"/><rect x="1440" y="72" width="1" height="4" fill="#333"/><rect x="1417.500" y="80.500" width="28" height="23" rx="3" fill="#3b3b3b" stroke="#474747"/><rect x="1426.500" y="84.500" width="4" height="4" fill="none" stroke="#dcdcdc"/><rect x="1426.500" y="90.500" width="4" height="4" fill="none" stroke="#dcdcdc"/><rect x="1426" y="96" width="5" height="5" fill="#bdbdbd"/><path d="M1436 99.500c3.500-3 6.500-9.500 2-12.800" fill="none" stroke="#dcdcdc" stroke-width="1.900"/><path d="M1433.300 87.500l5.700-3.500v6.200z" fill="#dcdcdc"/><path d="M1425 113l15 7.500-15 7.500z" fill="#dcdcdc"/><rect x="1413" y="137" width="38" height="1" fill="#2e2e2e"/><rect x="1413" y="138" width="38" height="1" fill="#5f5f5f"/><rect x="1422" y="141" width="1" height="4" fill="#333"/><rect x="1424" y="141" width="1" height="4" fill="#333"/><rect x="1426" y="141" width="1" height="4" fill="#333"/><rect x="1428" y="141" width="1" height="4" fill="#333"/><rect x="1430" y="141" width="1" height="4" fill="#333"/><rect x="1432" y="141" width="1" height="4" fill="#333"/><rect x="1434" y="141" width="1" height="4" fill="#333"/><rect x="1436" y="141" width="1" height="4" fill="#333"/><rect x="1438" y="141" width="1" height="4" fill="#333"/><rect x="1440" y="141" width="1" height="4" fill="#333"/><path d="M1430 152.500l4.500 2.300v5.400l-4.500 2.300-4.500-2.300v-5.400z" fill="none" stroke="#dcdcdc" stroke-width="1.200"/><path d="M1425.500 154.800l4.500 2.300 4.500-2.300M1430 157v5.500" fill="none" stroke="#dcdcdc" stroke-width="1.200"/><rect x="1436" y="153" width="4" height="3" fill="#dcdcdc"/><rect x="1436" y="158" width="4" height="3" fill="#dcdcdc"/><rect x="1425" y="165" width="15" height="4" fill="#dcdcdc"/><path d="M1436 166h4l-2 2.500z" fill="#222"/><rect x="1413" y="178" width="38" height="1" fill="#2e2e2e"/><rect x="1413" y="179" width="38" height="1" fill="#5f5f5f"/><rect x="1422" y="182" width="1" height="4" fill="#333"/><rect x="1424" y="182" width="1" height="4" fill="#333"/><rect x="1426" y="182" width="1" height="4" fill="#333"/><rect x="1428" y="182" width="1" height="4" fill="#333"/><rect x="1430" y="182" width="1" height="4" fill="#333"/><rect x="1432" y="182" width="1" height="4" fill="#333"/><rect x="1434" y="182" width="1" height="4" fill="#333"/><rect x="1436" y="182" width="1" height="4" fill="#333"/><rect x="1438" y="182" width="1" height="4" fill="#333"/><rect x="1440" y="182" width="1" height="4" fill="#333"/><rect x="1413" y="246" width="38" height="1" fill="#2e2e2e"/><rect x="1413" y="247" width="38" height="1" fill="#5f5f5f"/><rect x="1422" y="250" width="1" height="4" fill="#333"/><rect x="1424" y="250" width="1" height="4" fill="#333"/><rect x="1426" y="250" width="1" height="4" fill="#333"/><rect x="1428" y="250" width="1" height="4" fill="#333"/><rect x="1430" y="250" width="1" height="4" fill="#333"/><rect x="1432" y="250" width="1" height="4" fill="#333"/><rect x="1434" y="250" width="1" height="4" fill="#333"/><rect x="1436" y="250" width="1" height="4" fill="#333"/><rect x="1438" y="250" width="1" height="4" fill="#333"/><rect x="1440" y="250" width="1" height="4" fill="#333"/><path d="M1425.200 278.300l5.500-5.500" stroke="#dcdcdc" stroke-width="3.600" stroke-linecap="round"/><path d="M1430 273.500l10-10" stroke="#dcdcdc" stroke-width="1.700" stroke-linecap="round"/><path d="M1427.500 266.500l10.500 7.500" stroke="#dcdcdc" stroke-width="2.300"/><circle cx="1439.300" cy="274.600" r="2" fill="#535353" stroke="#dcdcdc" stroke-width="1.700"/><circle cx="1426.300" cy="265.300" r="3.100" fill="#dcdcdc"/><path d="M1421.500 265.600l4.300-.3" stroke="#535353" stroke-width="2"/><rect x="1413" y="288" width="38" height="1" fill="#2e2e2e"/><rect x="1413" y="289" width="38" height="1" fill="#5f5f5f"/><rect x="1422" y="292" width="1" height="4" fill="#333"/><rect x="1424" y="292" width="1" height="4" fill="#333"/><rect x="1426" y="292" width="1" height="4" fill="#333"/><rect x="1428" y="292" width="1" height="4" fill="#333"/><rect x="1430" y="292" width="1" height="4" fill="#333"/><rect x="1432" y="292" width="1" height="4" fill="#333"/><rect x="1434" y="292" width="1" height="4" fill="#333"/><rect x="1436" y="292" width="1" height="4" fill="#333"/><rect x="1438" y="292" width="1" height="4" fill="#333"/><rect x="1440" y="292" width="1" height="4" fill="#333"/><path d="M1432.500 303.500l7 3.500v8.500l-7 4-7-4v-8.500z" fill="#dcdcdc"/><path d="M1425.500 307l7 3.500 7-3.500M1432.500 310.500v9" fill="none" stroke="#555" stroke-width="1"/><rect x="1413" y="329" width="38" height="1" fill="#2e2e2e"/><rect x="1413" y="330" width="38" height="1" fill="#5f5f5f"/></svg>
<span class="t" style="left:1425px;top:193px;font-size:17px;font-weight:bold;color:#dcdcdc;transform:scaleX(.96);transform-origin:0 0">A</span><div class="abs" style="left:1438px;top:193px;width:1px;height:18px;background:#dcdcdc"></div>
<svg style="left:0;top:0" width="1638" height="300"><path d="M1431 222.500h7v1.500h-1v14.500h-1.500v-14.500h-1.500v14.500h-1.500v-7h-1.500a4.500 4.500 0 0 1 0-9z" fill="#dcdcdc"/></svg>
<div class="abs" style="left:1453px;top:69px;width:185px;height:310px;background:#494949"></div>
<div class="abs" style="left:1453px;top:69px;width:185px;height:17px;background:#3c3c3c;border-bottom:1px solid #2e2e2e"></div>
<div class="abs" style="left:1453px;top:70px;width:41px;height:16px;background:#424242;border-right:1px solid #2e2e2e;border-top:1px solid #4c4c4c"></div>
<div class="abs" style="left:1494px;top:69px;width:58px;height:18px;background:#535353;border-top:1px solid #666;border-right:1px solid #2e2e2e"></div>
<span class="t tab" style="left:1460px;top:73px">Color</span>
<span class="t tab on" style="left:1501px;top:73px">Swatches</span>
<svg style="left:0;top:0" width="1638" height="200" shape-rendering="crispEdges"><rect x="1452" y="87" width="186" height="13" fill="#2a2a2a"/><rect x="1453" y="88" width="11" height="11" fill="#ff0000"/><rect x="1465" y="88" width="11" height="11" fill="#ffff00"/><rect x="1477" y="88" width="11" height="11" fill="#00ff00"/><rect x="1489" y="88" width="11" height="11" fill="#00ffff"/><rect x="1501" y="88" width="11" height="11" fill="#0000ff"/><rect x="1513" y="88" width="11" height="11" fill="#ff00ff"/><rect x="1525" y="88" width="11" height="11" fill="#ffffff"/><rect x="1537" y="88" width="11" height="11" fill="#ebebeb"/><rect x="1549" y="88" width="11" height="11" fill="#e1e1e1"/><rect x="1561" y="88" width="11" height="11" fill="#d7d7d7"/><rect x="1573" y="88" width="11" height="11" fill="#cccccc"/><rect x="1585" y="88" width="11" height="11" fill="#c2c2c2"/><rect x="1597" y="88" width="11" height="11" fill="#b7b7b7"/><rect x="1609" y="88" width="11" height="11" fill="#acacac"/><rect x="1621" y="88" width="11" height="11" fill="#a1a1a1"/><rect x="1633" y="88" width="11" height="11" fill="#959595"/><rect x="1452" y="99" width="186" height="13" fill="#2a2a2a"/><rect x="1453" y="100" width="11" height="11" fill="#fff200"/><rect x="1465" y="100" width="11" height="11" fill="#00a651"/><rect x="1477" y="100" width="11" height="11" fill="#00aeef"/><rect x="1489" y="100" width="11" height="11" fill="#2e3192"/><rect x="1501" y="100" width="11" height="11" fill="#ec008c"/><rect x="1513" y="100" width="11" height="11" fill="#989898"/><rect x="1525" y="100" width="11" height="11" fill="#898989"/><rect x="1537" y="100" width="11" height="11" fill="#7d7d7d"/><rect x="1549" y="100" width="11" height="11" fill="#707070"/><rect x="1561" y="100" width="11" height="11" fill="#626262"/><rect x="1573" y="100" width="11" height="11" fill="#555555"/><rect x="1585" y="100" width="11" height="11" fill="#464646"/><rect x="1597" y="100" width="11" height="11" fill="#363636"/><rect x="1609" y="100" width="11" height="11" fill="#1c1c1c"/><rect x="1621" y="100" width="11" height="11" fill="#000000"/><rect x="1633" y="100" width="11" height="11" fill="#f7a17a"/><rect x="1452" y="111" width="186" height="13" fill="#2a2a2a"/><rect x="1453" y="112" width="11" height="11" fill="#fdc689"/><rect x="1465" y="112" width="11" height="11" fill="#fff799"/><rect x="1477" y="112" width="11" height="11" fill="#c4df9b"/><rect x="1489" y="112" width="11" height="11" fill="#a3d39c"/><rect x="1501" y="112" width="11" height="11" fill="#82ca9c"/><rect x="1513" y="112" width="11" height="11" fill="#7accc8"/><rect x="1525" y="112" width="11" height="11" fill="#6dcff6"/><rect x="1537" y="112" width="11" height="11" fill="#7da7d9"/><rect x="1549" y="112" width="11" height="11" fill="#8393ca"/><rect x="1561" y="112" width="11" height="11" fill="#8781bd"/><rect x="1573" y="112" width="11" height="11" fill="#a186be"/><rect x="1585" y="112" width="11" height="11" fill="#bd8cbf"/><rect x="1597" y="112" width="11" height="11" fill="#f49ac1"/><rect x="1609" y="112" width="11" height="11" fill="#f5989d"/><rect x="1621" y="112" width="11" height="11" fill="#f26c4f"/><rect x="1633" y="112" width="11" height="11" fill="#f68e54"/><rect x="1452" y="123" width="186" height="13" fill="#2a2a2a"/><rect x="1453" y="124" width="11" height="11" fill="#fff568"/><rect x="1465" y="124" width="11" height="11" fill="#acd373"/><rect x="1477" y="124" width="11" height="11" fill="#7cc576"/><rect x="1489" y="124" width="11" height="11" fill="#3cb878"/><rect x="1501" y="124" width="11" height="11" fill="#1cbbb4"/><rect x="1513" y="124" width="11" height="11" fill="#00bff3"/><rect x="1525" y="124" width="11" height="11" fill="#448ccb"/><rect x="1537" y="124" width="11" height="11" fill="#5674b9"/><rect x="1549" y="124" width="11" height="11" fill="#605ca8"/><rect x="1561" y="124" width="11" height="11" fill="#8560a8"/><rect x="1573" y="124" width="11" height="11" fill="#a864a8"/><rect x="1585" y="124" width="11" height="11" fill="#f06eaa"/><rect x="1597" y="124" width="11" height="11" fill="#f26d7d"/><rect x="1609" y="124" width="11" height="11" fill="#ed1c24"/><rect x="1621" y="124" width="11" height="11" fill="#f26522"/><rect x="1633" y="124" width="11" height="11" fill="#f7941d"/><rect x="1452" y="135" width="186" height="13" fill="#2a2a2a"/><rect x="1453" y="136" width="11" height="11" fill="#8dc63f"/><rect x="1465" y="136" width="11" height="11" fill="#39b54a"/><rect x="1477" y="136" width="11" height="11" fill="#00a651"/><rect x="1489" y="136" width="11" height="11" fill="#00a99d"/><rect x="1501" y="136" width="11" height="11" fill="#00aeef"/><rect x="1513" y="136" width="11" height="11" fill="#0072bc"/><rect x="1525" y="136" width="11" height="11" fill="#0054a6"/><rect x="1537" y="136" width="11" height="11" fill="#2e3192"/><rect x="1549" y="136" width="11" height="11" fill="#662d91"/><rect x="1561" y="136" width="11" height="11" fill="#92278f"/><rect x="1573" y="136" width="11" height="11" fill="#ec008c"/><rect x="1585" y="136" width="11" height="11" fill="#ed145b"/><rect x="1597" y="136" width="11" height="11" fill="#b91217"/><rect x="1609" y="136" width="11" height="11" fill="#b04a14"/><rect x="1621" y="136" width="11" height="11" fill="#b27010"/><rect x="1633" y="136" width="11" height="11" fill="#b0a510"/><rect x="1452" y="147" width="186" height="13" fill="#2a2a2a"/><rect x="1453" y="148" width="11" height="11" fill="#1a8b3a"/><rect x="1465" y="148" width="11" height="11" fill="#008541"/><rect x="1477" y="148" width="11" height="11" fill="#00857b"/><rect x="1489" y="148" width="11" height="11" fill="#0082b3"/><rect x="1501" y="148" width="11" height="11" fill="#00568f"/><rect x="1513" y="148" width="11" height="11" fill="#003c80"/><rect x="1525" y="148" width="11" height="11" fill="#1f1875"/><rect x="1537" y="148" width="11" height="11" fill="#4e1070"/><rect x="1549" y="148" width="11" height="11" fill="#72056e"/><rect x="1561" y="148" width="11" height="11" fill="#b0056a"/><rect x="1573" y="148" width="11" height="11" fill="#b00545"/><rect x="1585" y="148" width="11" height="11" fill="#930303"/><rect x="1597" y="148" width="11" height="11" fill="#923a03"/><rect x="1609" y="148" width="11" height="11" fill="#935803"/><rect x="1621" y="148" width="11" height="11" fill="#979205"/><rect x="1633" y="148" width="11" height="11" fill="#4a7a1f"/><rect x="1452" y="159" width="186" height="13" fill="#2a2a2a"/><rect x="1453" y="160" width="11" height="11" fill="#006a2e"/><rect x="1465" y="160" width="11" height="11" fill="#006b62"/><rect x="1477" y="160" width="11" height="11" fill="#006a92"/><rect x="1489" y="160" width="11" height="11" fill="#003f73"/><rect x="1501" y="160" width="11" height="11" fill="#002868"/><rect x="1513" y="160" width="11" height="11" fill="#10005c"/><rect x="1525" y="160" width="11" height="11" fill="#3c005a"/><rect x="1537" y="160" width="11" height="11" fill="#590057"/><rect x="1549" y="160" width="11" height="11" fill="#8e0052"/><rect x="1561" y="160" width="11" height="11" fill="#8e002e"/><rect x="1573" y="160" width="11" height="11" fill="#c7b299"/><rect x="1585" y="160" width="11" height="11" fill="#998675"/><rect x="1597" y="160" width="11" height="11" fill="#736357"/><rect x="1609" y="160" width="11" height="11" fill="#534741"/><rect x="1621" y="160" width="11" height="11" fill="#362f2d"/><rect x="1633" y="160" width="11" height="11" fill="#c69c6d"/><rect x="1452" y="171" width="49" height="13" fill="#2a2a2a"/><rect x="1453" y="172" width="11" height="11" fill="#8c6239"/><rect x="1465" y="172" width="11" height="11" fill="#754c24"/><rect x="1477" y="172" width="11" height="11" fill="#603913"/><rect x="1489" y="172" width="11" height="11" fill="#b3d4f3"/></svg>
<div class="abs" style="left:1453px;top:361px;width:185px;height:18px;background:#535353;border-top:1px solid #646464"></div>
<svg style="left:0;top:0" width="1638" height="400"><path d="M1607 365h10v10h-6l-4-4z" fill="#dedede"/><path d="M1607 371h4v4z" fill="#dedede" stroke="#535353" stroke-width="1"/><path d="M1607 371.500l3.500 3.500h-3.500z" fill="#535353"/><path d="M1634.500 366.500h5v-1.500h3M1632.500 368.500h8M1634.500 369v7" stroke="#8a8a8a" fill="none"/></svg>
<div class="abs" style="left:1453px;top:379px;width:185px;height:3px;background:#2e2e2e"></div>
<div class="abs" style="left:1453px;top:382px;width:185px;height:311px;background:#494949"></div>
<div class="abs" style="left:1453px;top:382px;width:185px;height:17px;background:#3c3c3c;border-bottom:1px solid #2e2e2e"></div>
<div class="abs" style="left:1453px;top:383px;width:74px;height:16px;background:#424242;border-right:1px solid #2e2e2e;border-top:1px solid #4c4c4c"></div>
<div class="abs" style="left:1527px;top:382px;width:43px;height:18px;background:#535353;border-top:1px solid #666;border-right:1px solid #2e2e2e"></div>
<span class="t tab" style="left:1460px;top:386px">Adjustments</span>
<span class="t tab on" style="left:1534px;top:386px">Styles</span>
<svg style="left:0;top:0" width="1638" height="700"><defs>
<radialGradient id="g01"><stop offset="0" stop-color="#ffd030"/><stop offset=".45" stop-color="#ff6a10"/><stop offset="1" stop-color="#c01808"/></radialGradient>
<radialGradient id="g03"><stop offset="0" stop-color="#2a2a2a"/><stop offset=".35" stop-color="#777"/><stop offset=".55" stop-color="#222"/><stop offset="1" stop-color="#3a3a3a"/></radialGradient>
<linearGradient id="g04" x1="0" y1="0" x2="0" y2="1"><stop offset="0" stop-color="#b8dcff"/><stop offset=".3" stop-color="#3e8be0"/><stop offset="1" stop-color="#1d62b8"/></linearGradient>
<linearGradient id="g10" x1="0" y1="0" x2="1" y2="1"><stop offset="0" stop-color="#4a4a4a"/><stop offset=".5" stop-color="#9a9a9a"/><stop offset=".75" stop-color="#666"/><stop offset="1" stop-color="#c8c8c8"/></linearGradient>
<linearGradient id="g12" x1="0" y1="0" x2="0" y2="1"><stop offset="0" stop-color="#7e6228"/><stop offset="1" stop-color="#a09274"/></linearGradient>
<linearGradient id="g20" x1="0" y1="0" x2="0.3" y2="1"><stop offset="0" stop-color="#c8643c"/><stop offset=".6" stop-color="#e89848"/><stop offset="1" stop-color="#e8c070"/></linearGradient>
<linearGradient id="g21" x1="0" y1="0" x2="0" y2="1"><stop offset="0" stop-color="#7ab4ee"/><stop offset="1" stop-color="#c6dcfa"/></linearGradient>
<linearGradient id="g22" x1="0" y1="0" x2="0" y2="1"><stop offset="0" stop-color="#7ab8ee"/><stop offset=".5" stop-color="#e4f0fa"/><stop offset=".6" stop-color="#5a3808"/><stop offset="1" stop-color="#c88a18"/></linearGradient>
<linearGradient id="g24" x1="0" y1="0" x2="0" y2="1"><stop offset="0" stop-color="#b078c8"/><stop offset="1" stop-color="#4a4aa0"/></linearGradient>
<linearGradient id="g32" x1="0" y1="0" x2="1" y2="1"><stop offset="0" stop-color="#9a9a9a"/><stop offset=".5" stop-color="#808080"/><stop offset=".5" stop-color="#5e5e5e"/><stop offset="1" stop-color="#6a6a6a"/></linearGradient>
</defs><rect x="1452.5" y="400.5" width="32" height="32" fill="#3a3a3a" stroke="#3b3b3b"/><rect x="1484.5" y="400.5" width="32" height="32" fill="#535353" stroke="#3b3b3b"/><rect x="1516.5" y="400.5" width="32" height="32" fill="#535353" stroke="#3b3b3b"/><rect x="1548.5" y="400.5" width="32" height="32" fill="#535353" stroke="#3b3b3b"/><rect x="1580.5" y="400.5" width="32" height="32" fill="#535353" stroke="#3b3b3b"/><rect x="1612.5" y="400.5" width="32" height="32" fill="#535353" stroke="#3b3b3b"/><rect x="1452.5" y="432.5" width="32" height="32" fill="#535353" stroke="#3b3b3b"/><rect x="1484.5" y="432.5" width="32" height="32" fill="#535353" stroke="#3b3b3b"/><rect x="1516.5" y="432.5" width="32" height="32" fill="#535353" stroke="#3b3b3b"/><rect x="1548.5" y="432.5" width="32" height="32" fill="#535353" stroke="#3b3b3b"/><rect x="1580.5" y="432.5" width="32" height="32" fill="#535353" stroke="#3b3b3b"/><rect x="1612.5" y="432.5" width="32" height="32" fill="#535353" stroke="#3b3b3b"/><rect x="1452.5" y="464.5" width="32" height="32" fill="#535353" stroke="#3b3b3b"/><rect x="1484.5" y="464.5" width="32" height="32" fill="#535353" stroke="#3b3b3b"/><rect x="1516.5" y="464.5" width="32" height="32" fill="#535353" stroke="#3b3b3b"/><rect x="1548.5" y="464.5" width="32" height="32" fill="#535353" stroke="#3b3b3b"/><rect x="1580.5" y="464.5" width="32" height="32" fill="#535353" stroke="#3b3b3b"/><rect x="1612.5" y="464.5" width="32" height="32" fill="#535353" stroke="#3b3b3b"/><rect x="1452.5" y="496.5" width="32" height="32" fill="#535353" stroke="#3b3b3b"/><rect x="1484.5" y="496.5" width="32" height="32" fill="#535353" stroke="#3b3b3b"/><rect x="1516.5" y="496.5" width="32" height="32" fill="#535353" stroke="#3b3b3b"/><rect x="1461" y="409" width="16" height="16" fill="#fff" stroke="#222" stroke-width="1"/><path d="M1459 407l20 20" stroke="#c01020" stroke-width="2.200"/><rect x="1494.5" y="410.5" width="16" height="16" fill="#222" opacity=".6"/><rect x="1493" y="409" width="16" height="16" fill="url(#g01)"/><rect x="1521.5" y="405.5" width="23" height="23" rx="3.500" fill="none" stroke="#e6e2b4" stroke-width="1.300"/><rect x="1524" y="408" width="18" height="18" rx="2" fill="none" stroke="#e6e2b4" stroke-width="1.300"/><rect x="1558" y="410" width="16" height="16" fill="#1a1a1a" opacity=".6"/><rect x="1557" y="409" width="16" height="16" rx="2" fill="url(#g03)"/><rect x="1589" y="409" width="16" height="16" fill="url(#g04)"/><path d="M1591 409l5 4 6-4" fill="#e8f4ff" opacity=".7"/><rect x="1621" y="409" width="16" height="16" fill="#a8a8a8"/><rect x="1461" y="441" width="16" height="16" fill="url(#g10)"/><rect x="1493" y="441" width="16" height="16" fill="#6a5a30" opacity=".85"/><rect x="1525" y="441" width="16" height="16" fill="url(#g12)"/><rect x="1557" y="441" width="16" height="16" fill="#e0203a"/><rect x="1557" y="445" width="16" height="1" fill="#8a1020"/><rect x="1557" y="450" width="16" height="1" fill="#8a1020"/><rect x="1557" y="441" width="16" height="2" fill="#f06070"/><rect x="1589" y="441" width="16" height="16" fill="#181818"/><path d="M1589 444l5-3h4l-9 8z" fill="#20b0c0"/><path d="M1595 441h10v5l-6 2z" fill="#c03070"/><path d="M1589 457l8-7 8 4v3z" fill="#e8d838"/><path d="M1598 444l7 3v3l-9-3z" fill="#e8e8e0"/><rect x="1621" y="441" width="16" height="16" fill="#e8d800"/><rect x="1625" y="445" width="8" height="8" fill="#8a8a10"/><rect x="1621" y="441" width="16" height="16" fill="none" stroke="#fff27a" stroke-width="1"/><rect x="1461" y="473" width="16" height="16" fill="url(#g20)"/><rect x="1493" y="473" width="16" height="16" fill="url(#g21)"/><rect x="1493.5" y="473.5" width="15" height="15" fill="none" stroke="#d8e8ff" stroke-opacity=".7"/><rect x="1525" y="473" width="16" height="16" fill="url(#g22)"/><rect x="1557" y="473" width="16" height="16" fill="#f4f4f4"/><rect x="1560" y="477" width="1" height="2" fill="#8a8a8a"/><rect x="1564" y="475" width="1" height="1" fill="#8a8a8a"/><rect x="1557" y="479" width="2" height="1" fill="#8a8a8a"/><rect x="1560" y="481" width="2" height="2" fill="#8a8a8a"/><rect x="1569" y="475" width="1" height="2" fill="#8a8a8a"/><rect x="1560" y="487" width="1" height="2" fill="#8a8a8a"/><rect x="1569" y="477" width="1" height="1" fill="#8a8a8a"/><rect x="1561" y="477" width="2" height="1" fill="#8a8a8a"/><rect x="1570" y="482" width="2" height="2" fill="#8a8a8a"/><rect x="1565" y="476" width="1" height="1" fill="#8a8a8a"/><rect x="1564" y="477" width="1" height="2" fill="#8a8a8a"/><rect x="1557" y="487" width="2" height="2" fill="#8a8a8a"/><rect x="1570" y="485" width="1" height="2" fill="#8a8a8a"/><rect x="1563" y="482" width="2" height="2" fill="#8a8a8a"/><rect x="1564" y="475" width="1" height="2" fill="#8a8a8a"/><rect x="1561" y="486" width="1" height="1" fill="#8a8a8a"/><rect x="1557" y="480" width="2" height="2" fill="#8a8a8a"/><rect x="1568" y="478" width="1" height="1" fill="#8a8a8a"/><rect x="1558" y="479" width="1" height="2" fill="#8a8a8a"/><rect x="1561" y="475" width="2" height="2" fill="#8a8a8a"/><rect x="1568" y="482" width="2" height="1" fill="#8a8a8a"/><rect x="1571" y="478" width="1" height="1" fill="#8a8a8a"/><rect x="1568" y="476" width="2" height="1" fill="#8a8a8a"/><rect x="1558" y="478" width="1" height="2" fill="#8a8a8a"/><rect x="1564" y="473" width="1" height="2" fill="#8a8a8a"/><rect x="1568" y="474" width="2" height="2" fill="#8a8a8a"/><rect x="1557" y="478" width="2" height="2" fill="#8a8a8a"/><rect x="1559" y="485" width="2" height="1" fill="#8a8a8a"/><rect x="1561" y="482" width="1" height="2" fill="#8a8a8a"/><rect x="1561" y="475" width="2" height="2" fill="#8a8a8a"/><rect x="1566" y="475" width="2" height="1" fill="#8a8a8a"/><rect x="1562" y="473" width="2" height="1" fill="#8a8a8a"/><rect x="1562" y="485" width="2" height="2" fill="#8a8a8a"/><rect x="1566" y="474" width="2" height="1" fill="#8a8a8a"/><rect x="1563" y="487" width="1" height="1" fill="#8a8a8a"/><rect x="1557" y="473" width="1" height="1" fill="#8a8a8a"/><rect x="1566" y="483" width="1" height="1" fill="#8a8a8a"/><rect x="1565" y="480" width="1" height="2" fill="#8a8a8a"/><rect x="1557" y="474" width="2" height="2" fill="#8a8a8a"/><rect x="1567" y="476" width="2" height="1" fill="#8a8a8a"/><rect x="1591" y="475" width="16" height="16" fill="#1a1a1a" opacity=".75"/><rect x="1589" y="473" width="16" height="16" fill="url(#g24)"/><rect x="1621" y="473" width="16" height="16" fill="#585858"/><rect x="1621" y="488" width="16" height="1.500" fill="#333"/><rect x="1461.5" y="505.5" width="15" height="15" fill="#555" stroke="#353535"/><rect x="1493.5" y="505.5" width="15" height="15" fill="#555" stroke="#353535"/><rect x="1525" y="505" width="16" height="16" fill="url(#g32)"/><rect x="1453" y="675" width="185" height="18" fill="#535353"/><rect x="1453" y="675" width="185" height="1" fill="#636363"/><circle cx="1580.500" cy="684" r="4.800" fill="none" stroke="#8e8e8e" stroke-width="1.500"/><path d="M1577 680.500l7 7" stroke="#8e8e8e" stroke-width="1.500"/><path d="M1607 679h10v10h-6l-4-4z" fill="#909090"/><path d="M1607 685h4v4z" fill="#909090" stroke="#535353" stroke-width="1"/><path d="M1607 685.500l3.500 3.500h-3.500z" fill="#535353"/><path d="M1634.500 680.500h5v-1.500h3M1632.500 682.500h8M1634.500 683v7" stroke="#8a8a8a" fill="none"/></svg>
<div class="abs" style="left:1453px;top:693px;width:185px;height:2px;background:#2e2e2e"></div>
<div class="abs" style="left:1453px;top:695px;width:185px;height:271px;background:#494949"></div>
<div class="abs" style="left:1453px;top:695px;width:185px;height:17px;background:#3c3c3c;border-bottom:1px solid #2e2e2e"></div>
<div class="abs" style="left:1453px;top:695px;width:43px;height:18px;background:#535353;border-top:1px solid #666;border-right:1px solid #2e2e2e"></div>
<div class="abs" style="left:1496px;top:696px;width:56px;height:16px;background:#424242;border-right:1px solid #2e2e2e;border-top:1px solid #4c4c4c"></div>
<div class="abs" style="left:1552px;top:696px;width:42px;height:16px;background:#424242;border-right:1px solid #2e2e2e;border-top:1px solid #4c4c4c"></div>
<span class="t tab on" style="left:1459px;top:699px">Layers</span>
<span class="t tab" style="left:1503px;top:699px">Channels</span>
<span class="t tab" style="left:1559px;top:699px">Paths</span>
<div class="abs" style="left:1453px;top:712px;width:185px;height:86px;background:#535353"></div>
<div class="abs" style="left:1453px;top:740px;width:185px;height:2px;border-top:1px solid #404040;border-bottom:1px solid #5e5e5e"></div>
<div class="abs" style="left:1453px;top:768px;width:185px;height:2px;border-top:1px solid #404040;border-bottom:1px solid #5e5e5e"></div>
<div class="dd" style="left:1457px;top:717px;width:70px;height:19px"></div>
<span class="t ui" style="left:1479px;top:721px;color:#f0f0f0;font-size:11px">Kind</span>
<div class="dd" style="left:1457px;top:745px;width:111px;height:19px"></div>
<span class="t ui" style="left:1465px;top:749px;color:#f0f0f0;font-size:11px">Normal</span>
<span class="t ui" style="left:1575px;top:748px;color:#f0f0f0;font-size:11px">Opacity:</span>
<div class="abs" style="left:1617px;top:744px;width:30px;height:20px;background:#3a3a3a;border:1px solid #2c2c2c"></div>
<span class="t ui" style="left:1622px;top:749px;color:#f0f0f0;font-size:11px">100%</span>
<span class="t ui" style="left:1459px;top:777px;color:#f0f0f0;font-size:11px">Lock:</span>
<span class="t ui" style="left:1597px;top:776px;color:#f0f0f0;font-size:11px">Fill:</span>
<div class="abs" style="left:1617px;top:772px;width:30px;height:20px;background:#3a3a3a;border:1px solid #2c2c2c"></div>
<span class="t ui" style="left:1622px;top:777px;color:#f0f0f0;font-size:11px">100%</span>
<div class="abs" style="left:1453px;top:797px;width:185px;height:1px;background:#3a3a3a"></div>
<div class="abs" style="left:1453px;top:798px;width:185px;height:39px;background:#535353;border-bottom:1px solid #3e3e3e"></div>
<div class="abs" style="left:1484px;top:798px;width:154px;height:38px;background:#6a7f9c"></div>
<div class="abs" style="left:1453px;top:837px;width:185px;height:39px;background:#535353;border-bottom:1px solid #3a3a3a"></div>
<div class="abs" style="left:1483px;top:798px;width:1px;height:78px;background:#444"></div>
<span class="t ui" style="left:1529px;top:813px;color:#f4f4f4;font-size:11px">Layer 1</span>
<span class="t ui" style="left:1529px;top:852px;color:#f4f4f4;font-size:11px;font-style:italic">Background</span>
<svg style="left:0;top:0" width="1638" height="966"><circle cx="1470.500" cy="725" r="3" fill="none" stroke="#e4e4e4" stroke-width="1.400"/><path d="M1468.500 727.500l-3.500 3.500" stroke="#e4e4e4" stroke-width="1.800"/><path d="M1517 724.500l2.500-3 2.500 3zM1517 727.500l2.500 3 2.500-3z" fill="#e4e4e4"/><path d="M1557 752.500l2.500-3 2.500 3zM1557 755.500l2.500 3 2.500-3z" fill="#e4e4e4"/><rect x="1539.500" y="721.500" width="12" height="9" fill="none" stroke="#e4e4e4" stroke-width="1.200"/><path d="M1541 729l3-3.500 2 2 2-1.500 2.500 3z" fill="#e4e4e4"/><circle cx="1548.500" cy="724.500" r="1" fill="#e4e4e4"/><circle cx="1569" cy="726" r="4.800" fill="none" stroke="#e4e4e4" stroke-width="1.300"/><path d="M1565.600 729.400a4.800 4.800 0 0 1 6.800-6.800z" fill="#e4e4e4"/><rect x="1613.500" y="721.500" width="8" height="8" fill="none" stroke="#e4e4e4" stroke-width="1.200"/><rect x="1612.2" y="720.2" width="2.600" height="2.600" fill="#535353" stroke="#e4e4e4" stroke-width=".9"/><rect x="1620.2" y="720.2" width="2.600" height="2.600" fill="#535353" stroke="#e4e4e4" stroke-width=".9"/><rect x="1612.2" y="728.2" width="2.600" height="2.600" fill="#535353" stroke="#e4e4e4" stroke-width=".9"/><rect x="1620.2" y="728.2" width="2.600" height="2.600" fill="#535353" stroke="#e4e4e4" stroke-width=".9"/><rect x="1635" y="725" width="5" height="6" fill="#e4e4e4"/><rect x="1492" y="777" width="11" height="11" fill="#dcdcdc"/><rect x="1493" y="778" width="3" height="3" fill="#8c8c8c"/><rect x="1499" y="778" width="3" height="3" fill="#8c8c8c"/><rect x="1496" y="781" width="3" height="3" fill="#8c8c8c"/><rect x="1493" y="784" width="3" height="3" fill="#8c8c8c"/><rect x="1499" y="784" width="3" height="3" fill="#8c8c8c"/><path d="M1528 775.300l-6.800 9.200-2-1.500 7.300-8.700z" fill="#e4e4e4"/><path d="M1518.700 783.200l2.300 1.800c-1.200 2.600-4.200 3.900-9 3 2.600-.9 2.600-4.300 6.700-4.800z" fill="#e4e4e4"/><path d="M1541.5 776.0l2.500 3h-1.800v2.800h2.800v-1.800l3 2.500-3 2.500v-1.800h-2.800v2.800h1.800l-2.500 3-2.500-3h1.800v-2.800h-2.800v1.800l-3-2.500 3-2.500v1.800h2.800v-2.800h-1.800z" fill="none" stroke="#e4e4e4" stroke-width="1"/><rect x="1558.500" y="781.500" width="10" height="7" rx="1" fill="#e4e4e4"/><path d="M1560.500 781.500v-2.500a3 3 0 0 1 6 0v2.500" fill="none" stroke="#e4e4e4" stroke-width="1.500"/><rect x="1563" y="783.500" width="1.500" height="3" fill="#444"/><path d="M1461.500 817c3-5.500 10-5.500 13 0-3 4.500-10 4.500-13 0z" fill="#d8d8d8"/><circle cx="1468" cy="816.7" r="2.600" fill="#444"/><circle cx="1467.300" cy="816" r=".9" fill="#ddd"/><path d="M1461.500 856c3-5.500 10-5.500 13 0-3 4.500-10 4.500-13 0z" fill="#d8d8d8"/><circle cx="1468" cy="855.7" r="2.600" fill="#444"/><circle cx="1467.300" cy="855" r=".9" fill="#ddd"/><defs><pattern id="chk" x="1487" y="801" width="8" height="8" patternUnits="userSpaceOnUse"><rect width="8" height="8" fill="#fff"/><rect width="4" height="4" fill="#cfcfcf"/><rect x="4" y="4" width="4" height="4" fill="#cfcfcf"/></pattern></defs><rect x="1485.500" y="799.500" width="35" height="36" fill="none" stroke="#fff" stroke-width="1"/><rect x="1490" y="799" width="26" height="38" fill="#6a7f9c"/><rect x="1485" y="804" width="36" height="27" fill="#6a7f9c"/><rect x="1486.500" y="800.500" width="33" height="34" fill="url(#chk)" stroke="#1a1a1a"/><path d="M1495 809c3-2.500 8-3 10.500-.5 2 2 3 7 5.500 11.500 1.500 3 .5 5.500-2 6-3.500 1-8.500.5-12-3.500-3-3.500-4.500-7-4-9.500z" fill="none" stroke="#8cc884" stroke-width=".9"/><rect x="1487.500" y="840.500" width="31" height="31" fill="#fff" stroke="#1a1a1a"/><rect x="1633.500" y="855.500" width="8" height="6" fill="none" stroke="#e4e4e4"/><path d="M1635.500 855v-2a2.500 2.500 0 0 1 5 0" fill="none" stroke="#e4e4e4"/></svg>
<span class="t" style="left:1587px;top:719px;font-family:'Liberation Serif',serif;font-size:14.5px;font-weight:bold;color:#e4e4e4">T</span>
</div>
</body></html>
